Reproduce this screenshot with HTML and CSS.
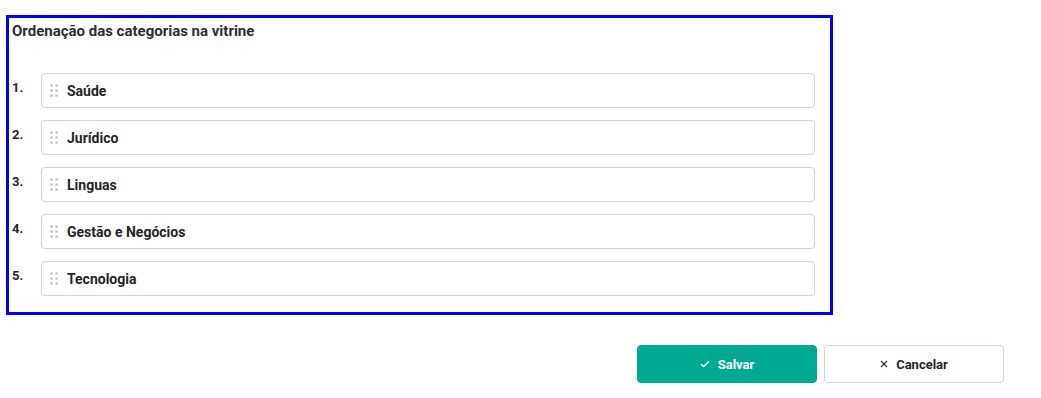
FILE: index.html
```html
<!DOCTYPE html>
<html lang="pt-BR">
<head>
    <meta charset="UTF-8">
    <meta name="viewport" content="width=device-width, initial-scale=1.0">
    <title>Ordenação das categorias</title>
    <link rel="stylesheet" href="styles.css">
</head>
<body>
    <div class="panel">
        <h2 class="panel-title">Ordenação das categorias na vitrine</h2>
        <ol class="sort-list">
            <li class="sort-row">
                <span class="sort-num">1.</span>
                <div class="sort-item"><span class="handle"><i></i><i></i><i></i><i></i><i></i><i></i></span>Saúde</div>
            </li>
            <li class="sort-row">
                <span class="sort-num">2.</span>
                <div class="sort-item"><span class="handle"><i></i><i></i><i></i><i></i><i></i><i></i></span>Jurídico</div>
            </li>
            <li class="sort-row">
                <span class="sort-num">3.</span>
                <div class="sort-item"><span class="handle"><i></i><i></i><i></i><i></i><i></i><i></i></span>Linguas</div>
            </li>
            <li class="sort-row">
                <span class="sort-num">4.</span>
                <div class="sort-item"><span class="handle"><i></i><i></i><i></i><i></i><i></i><i></i></span>Gestão e Negócios</div>
            </li>
            <li class="sort-row">
                <span class="sort-num">5.</span>
                <div class="sort-item"><span class="handle"><i></i><i></i><i></i><i></i><i></i><i></i></span>Tecnologia</div>
            </li>
        </ol>
    </div>

    <div class="actions">
        <button class="btn btn-save">
            <svg width="10" height="8" viewBox="0 0 10 8"><path d="M1 4.2 L3.6 6.6 L9 1.2" fill="none" stroke="#fff" stroke-width="1.4"/></svg>
            Salvar
        </button>
        <button class="btn btn-cancel">
            <svg width="8" height="8" viewBox="0 0 8 8"><path d="M1 1 L7 7 M7 1 L1 7" fill="none" stroke="#2d3440" stroke-width="1.3"/></svg>
            Cancelar
        </button>
    </div>
</body>
</html>
```

FILE: styles.css
```css
/* página */
body {
    margin: 0;
    font-family: Roboto, "Liberation Sans", Arial, sans-serif;
    color: #212529;
    background: #fff;
}

.panel {
    box-sizing: border-box;
    width: 827px;
    height: 300px;
    margin: 15px 0 0 6px;
    padding: 3px 15px 0 3px;
    border: 3px solid #0000ff;
}

.panel-title {
    margin: 0;
    font-size: 15px;
    line-height: 20px;
    font-weight: 700;
    color: #2b2f33;
}

.sort-list {
    list-style: none;
    margin: 32px 0 0;
    padding: 0;
    display: flex;
    flex-direction: column;
    gap: 12px;
}

.sort-row {
    display: flex;
    align-items: flex-start;
}

.sort-num {
    width: 29px;
    padding-top: 7px;
    font-size: 13px;
    line-height: 16px;
    font-weight: 700;
    color: #212529;
}

.sort-item {
    flex: 1;
    display: flex;
    align-items: center;
    height: 35px;
    box-sizing: border-box;
    padding-left: 8px;
    border: 1px solid #d2d2d2;
    border-radius: 4px;
    font-size: 14px;
    font-weight: 700;
    color: #212529;
}

/* alça de arrastar */
.handle {
    display: grid;
    grid-template-columns: 3px 3px;
    gap: 2px 2px;
    margin-right: 9px;
}

.handle i {
    width: 3px;
    height: 3px;
    border-radius: 50%;
    background: #c5cbd6;
}

.actions {
    display: flex;
    justify-content: flex-end;
    gap: 7px;
    margin: 30px 37px 0 0;
}

.btn {
    width: 180px;
    height: 38px;
    display: flex;
    align-items: center;
    justify-content: center;
    gap: 8px;
    border-radius: 4px;
    font-family: Roboto, "Liberation Sans", Arial, sans-serif;
    font-size: 13px;
    font-weight: 700;
    cursor: pointer;
}

.btn-save {
    background: #00a991;
    border: 1px solid #00a991;
    color: #fff;
}

.btn-cancel {
    background: #fff;
    border: 1px solid #cfd6e2;
    color: #212529;
}
```
